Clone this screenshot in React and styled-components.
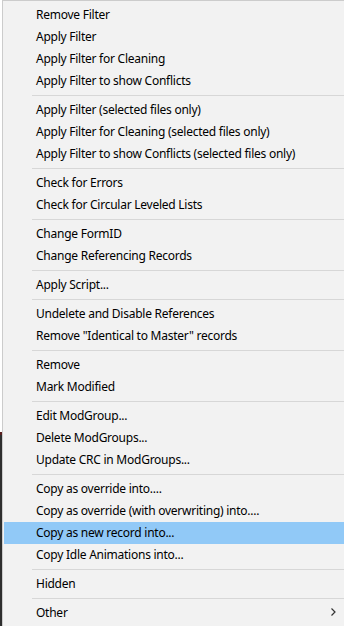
import React from "react";
import styled, { createGlobalStyle } from "styled-components";

const Global = createGlobalStyle`
  html, body { margin: 0; padding: 0; background: #2b2b2b; }
  body { width: 344px; height: 626px; overflow: hidden; }
`;

const Screen = styled.div`
  display: flex;
  width: 344px;
  height: 626px;
  overflow: hidden;
`;

const BackStrip = styled.div`
  flex: 0 0 2px;
  height: 626px;
  background: linear-gradient(
    to bottom,
    #ffffff 0px,
    #ffffff 432px,
    #5a2020 432px,
    #5a2020 435px,
    #2e2e2e 435px,
    #2e2e2e 626px
  );
`;

const Menu = styled.ul`
  list-style: none;
  margin: 0;
  flex: 1 1 auto;
  box-sizing: border-box;
  height: 626px;
  padding: 3px 0 3px 1px;
  background: #f2f2f2;
  border-top: 1px solid #cccccc;
  border-left: 1px solid #cccccc;
  font-family: "Noto Sans", "Open Sans", sans-serif;
  font-size: 12px;
  letter-spacing: -0.25px;
  color: #000000;
`;

const Item = styled.li`
  display: flex;
  align-items: center;
  justify-content: space-between;
  box-sizing: border-box;
  height: 22px;
  padding: 0 8px 2px 32px;
  white-space: nowrap;
  background: ${(p) => (p.$active ? "#91c9f7" : "transparent")};
`;

const Separator = styled.li`
  height: 1px;
  margin: 3px 0 3px 28px;
  background: #d7d7d7;
`;

const Chevron = () => (
  <svg width="5" height="8" viewBox="0 0 5 8" aria-hidden="true">
    <path d="M0.5 0.5 L4 4 L0.5 7.5" fill="none" stroke="#333" strokeWidth="1.2" />
  </svg>
);

const groups = [
  ["Remove Filter", "Apply Filter", "Apply Filter for Cleaning", "Apply Filter to show Conflicts"],
  [
    "Apply Filter (selected files only)",
    "Apply Filter for Cleaning (selected files only)",
    "Apply Filter to show Conflicts (selected files only)",
  ],
  ["Check for Errors", "Check for Circular Leveled Lists"],
  ["Change FormID", "Change Referencing Records"],
  ["Apply Script..."],
  ["Undelete and Disable References", 'Remove "Identical to Master" records'],
  ["Remove", "Mark Modified"],
  ["Edit ModGroup...", "Delete ModGroups...", "Update CRC in ModGroups..."],
  [
    "Copy as override into....",
    "Copy as override (with overwriting) into....",
    "Copy as new record into...",
    "Copy Idle Animations into...",
  ],
  ["Hidden"],
];

export default function App() {
  return (
    <>
      <Global />
      <Screen>
        <BackStrip />
        <Menu>
          {groups.map((g, gi) => (
            <React.Fragment key={gi}>
              {g.map((label) => (
                <Item key={label} $active={label === "Copy as new record into..."}>
                  <span>{label}</span>
                </Item>
              ))}
              <Separator />
            </React.Fragment>
          ))}
          <Item>
            <span>Other</span>
            <Chevron />
          </Item>
        </Menu>
      </Screen>
    </>
  );
}
